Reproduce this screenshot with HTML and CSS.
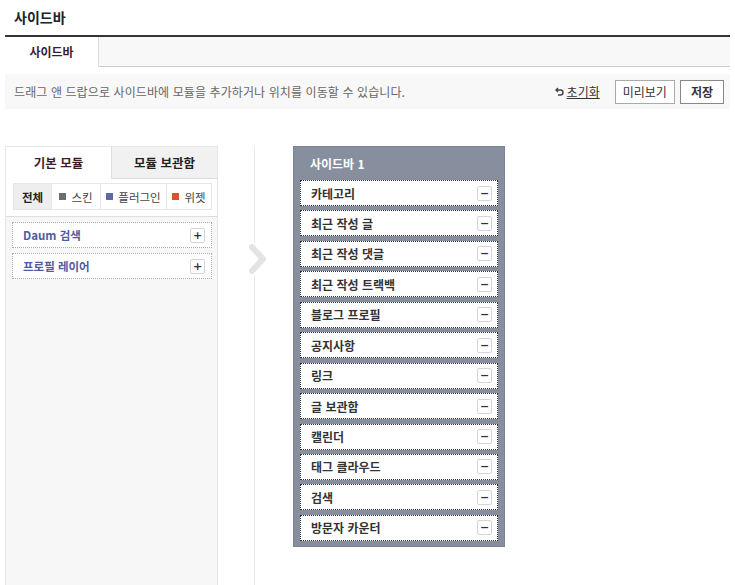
FILE: index.html
```html
<!DOCTYPE html>
<html lang="ko">
<head>
<meta charset="utf-8">
<title>사이드바</title>
<link rel="stylesheet" href="styles.css">
</head>
<body>
<h1 class="page-title">사이드바</h1>
<div class="tabbar">
  <div class="tab active">사이드바</div>
</div>
<div class="infobar">
  <p class="info-text">드래그 앤 드랍으로 사이드바에 모듈을 추가하거나 위치를 이동할 수 있습니다.</p>
  <div class="actions">
    <a class="reset"><svg class="reset-icon" width="9" height="9" viewBox="0 0 9 9"><path d="M3 1 L1 3 L3 5 M1 3 H5.5 A2.5 2.5 0 0 1 5.5 8 H3" fill="none" stroke="#444" stroke-width="1.4"/></svg><span>초기화</span></a>
    <button class="btn">미리보기</button>
    <button class="btn btn-save">저장</button>
  </div>
</div>
<div class="editor">
  <div class="modules">
    <div class="mod-tabs">
      <div class="mod-tab active">기본 모듈</div>
      <div class="mod-tab">모듈 보관함</div>
    </div>
    <div class="filter-wrap">
      <div class="filter">
        <span class="f-item all">전체</span>
        <span class="f-item"><i class="sq skin"></i>스킨</span>
        <span class="f-item"><i class="sq plugin"></i>플러그인</span>
        <span class="f-item"><i class="sq widget"></i>위젯</span>
      </div>
    </div>
    <ul class="mod-list">
      <li class="mod-item"><span>Daum 검색</span><b class="pm">+</b></li>
      <li class="mod-item"><span>프로필 레이어</span><b class="pm">+</b></li>
    </ul>
  </div>
  <div class="divider">
    <svg class="chev" width="22" height="32" viewBox="0 0 22 32"><path d="M5 4 L16 16 L5 28" fill="none" stroke="#e3e3e3" stroke-width="6" stroke-linecap="round" stroke-linejoin="round"/></svg>
  </div>
  <div class="sidebar">
    <div class="sb-title">사이드바 1</div>
    <ul class="sb-list">
      <li class="sb-item"><span>카테고리</span><b class="pm">−</b></li>
      <li class="sb-item"><span>최근 작성 글</span><b class="pm">−</b></li>
      <li class="sb-item"><span>최근 작성 댓글</span><b class="pm">−</b></li>
      <li class="sb-item"><span>최근 작성 트랙백</span><b class="pm">−</b></li>
      <li class="sb-item"><span>블로그 프로필</span><b class="pm">−</b></li>
      <li class="sb-item"><span>공지사항</span><b class="pm">−</b></li>
      <li class="sb-item"><span>링크</span><b class="pm">−</b></li>
      <li class="sb-item"><span>글 보관함</span><b class="pm">−</b></li>
      <li class="sb-item"><span>캘린더</span><b class="pm">−</b></li>
      <li class="sb-item"><span>태그 클라우드</span><b class="pm">−</b></li>
      <li class="sb-item"><span>검색</span><b class="pm">−</b></li>
      <li class="sb-item"><span>방문자 카운터</span><b class="pm">−</b></li>
    </ul>
  </div>
</div>
</body>
</html>
```

FILE: styles.css
```css
* { box-sizing: border-box; }
html, body { margin: 0; padding: 0; }
body {
  width: 735px;
  height: 585px;
  overflow: hidden;
  background: #fff;
  font-family: "Noto Sans CJK KR", "Noto Sans", sans-serif;
  font-size: 12px;
  color: #333;
}
ul { list-style: none; margin: 0; padding: 0; }

.page-title {
  margin: 0;
  height: 35px;
  padding: 8px 0 0 14px;
  font-size: 14px;
  line-height: 18px;
  font-weight: bold;
  color: #222;
}

.tabbar {
  margin: 0 5px;
  border-top: 2px solid #333;
  border-bottom: 1px solid #ccc;
  background: #f8f8f8;
  height: 32px;
  display: flex;
}
.tab {
  width: 94px;
  background: #fff;
  border-right: 1px solid #ddd;
  margin-bottom: -1px;
  text-align: center;
  line-height: 29px;
  font-size: 12px;
  font-weight: bold;
  color: #3d1d2c;
}

.infobar {
  margin: 7px 5px 0;
  height: 35px;
  background: #f8f8f8;
  display: flex;
  align-items: center;
  justify-content: space-between;
  padding: 0 6px 0 9px;
}
.info-text {
  margin: 0;
  color: #666;
  font-size: 12px;
  letter-spacing: 0.1px;
}
.actions { display: flex; align-items: center; }
.reset {
  display: flex;
  align-items: center;
  gap: 3px;
  color: #333;
  text-decoration: underline;
  margin-right: 10px;
  font-size: 12px;
}
.btn {
  font-family: inherit;
  font-size: 12px;
  height: 24px;
  padding: 0 7px;
  border: 1px solid #aaa;
  background: #fff;
  color: #333;
  margin-left: 5px;
  line-height: 20px;
}
.btn-save {
  font-weight: bold;
  padding: 0 10px;
  border-color: #888;
}

.editor {
  margin-top: 37px;
  display: flex;
  align-items: flex-start;
  padding-left: 5px;
}
.modules {
  width: 213px;
  height: 440px;
  background: #f7f7f7;
  border: 1px solid #e6e6e6;
  border-bottom: none;
}
.mod-tabs { display: flex; height: 32px; }
.mod-tab {
  flex: 1;
  text-align: center;
  line-height: 31px;
  font-size: 12.5px;
  font-weight: bold;
  color: #3d1d2c;
  background: #f1f1f1;
  border-left: 1px solid #ddd;
  border-bottom: 1px solid #ddd;
}
.mod-tab:last-child { color: #222; }
.mod-tab.active {
  background: #fff;
  border: none;
}
.filter-wrap {
  background: #fff;
  padding: 4px 5px 6px 7px;
  border-bottom: 1px solid #ddd;
}
.filter {
  display: flex;
  height: 27px;
  border: 1px solid #e6e6e6;
}
.f-item {
  display: flex;
  align-items: center;
  justify-content: center;
  gap: 5px;
  font-size: 11.5px;
  color: #444;
  border-left: 1px solid #e6e6e6;
}
.f-item:first-child { border-left: none; }
.f-item.all { width: 37px; background: #eee; font-weight: bold; color: #222; }
.f-item:nth-child(2) { width: 49px; }
.f-item:nth-child(3) { width: 66px; }
.f-item:nth-child(4) { flex: 1; }
.sq { display: inline-block; width: 7px; height: 7px; }
.sq.skin { background: #6d6d6d; }
.sq.plugin { background: #5d6aa8; }
.sq.widget { background: #cf5630; }

.mod-list { padding: 5px 5px 0 6px; }
.mod-item {
  height: 26px;
  margin-bottom: 5px;
  background: #fff;
  border: 1px dotted #aaa;
  display: flex;
  align-items: center;
  justify-content: space-between;
  padding: 0 6px 0 10px;
  font-weight: bold;
  color: #4f5aa5;
  font-size: 11.5px;
}

.pm {
  width: 15px;
  height: 15px;
  border: 1px solid #d5d5d5;
  border-radius: 2px;
  background: #fff;
  display: flex;
  align-items: center;
  justify-content: center;
  font-size: 11px;
  line-height: 1;
  color: #333;
  font-weight: bold;
  font-family: "DejaVu Sans", sans-serif;
}

.divider {
  width: 75px;
  height: 439px;
  display: flex;
  align-items: flex-start;
  justify-content: center;
  background: linear-gradient(#e8e8e8, #e8e8e8) no-repeat 36px 0 / 1px 100%;
}
.chev {
  background: #fff;
  margin-left: 4px;
  margin-top: 97px;
}

.sidebar {
  width: 212px;
  background: #878f9f;
  padding: 6px 6px 5px 6px;
  border: 1px solid #7b8393;
}
.sb-title {
  color: #fff;
  font-weight: bold;
  font-size: 12px;
  height: 27px;
  line-height: 22px;
  padding-left: 10px;
}
.sb-list { display: flex; flex-direction: column; gap: 4.45px; }
.sb-item {
  height: 26px;
  background: #fff;
  border: 1px dotted #333;
  display: flex;
  align-items: center;
  justify-content: space-between;
  padding: 0 5px 0 10px;
  font-size: 12px;
  font-weight: bold;
  color: #333;
}
```
